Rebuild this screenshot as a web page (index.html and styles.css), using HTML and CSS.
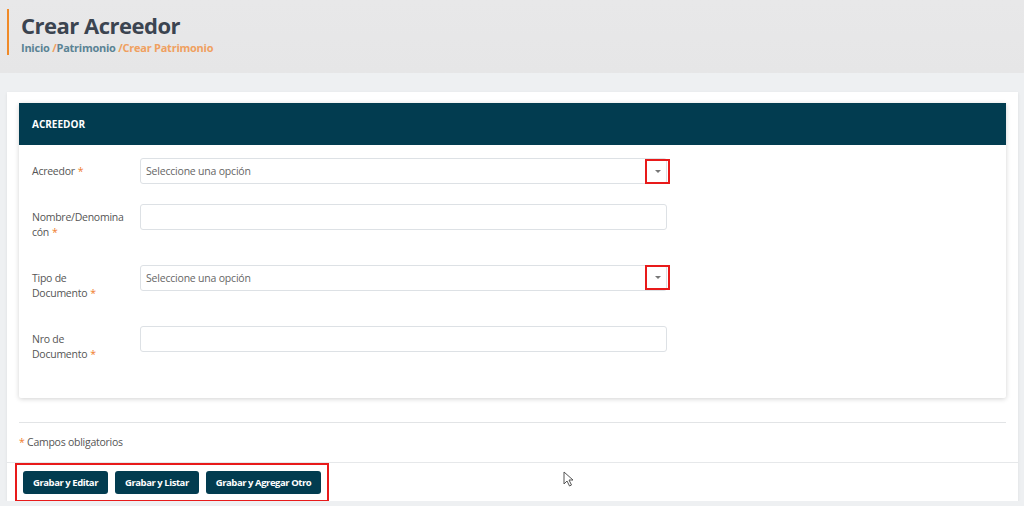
FILE: index.html
```html
<!DOCTYPE html>
<html lang="es">
<head>
    <meta charset="UTF-8">
    <title>Crear Acreedor</title>
    <link rel="stylesheet" href="styles.css">
</head>
<body>
    <div class="page-header">
        <div class="page-title">
            <h1>Crear Acreedor</h1>
            <div class="breadcrumb">
                <span class="crumb">Inicio</span>
                <span class="sep">/</span><span class="crumb">Patrimonio</span>
                <span class="sep">/</span><span class="current">Crear Patrimonio</span>
            </div>
        </div>
    </div>

    <div class="content">
        <div class="box">
            <div class="box-body">
                <div class="panel">
                    <div class="panel-heading">ACREEDOR</div>
                    <div class="panel-body">
                        <div class="form-row">
                            <label>Acreedor<span class="req">*</span></label>
                            <div class="select">
                                <span class="placeholder">Seleccione una opción</span>
                                <span class="caret-box mark"><span class="caret"></span></span>
                            </div>
                        </div>
                        <div class="form-row">
                            <label>Nombre/Denomina<br>cón<span class="req">*</span></label>
                            <div class="input"></div>
                        </div>
                        <div class="form-row">
                            <label>Tipo de<br>Documento<span class="req">*</span></label>
                            <div class="select">
                                <span class="placeholder">Seleccione una opción</span>
                                <span class="caret-box mark"><span class="caret"></span></span>
                            </div>
                        </div>
                        <div class="form-row">
                            <label>Nro de<br>Documento<span class="req">*</span></label>
                            <div class="input"></div>
                        </div>
                    </div>
                </div>
                <hr>
                <p class="note"><span class="req">*</span> Campos obligatorios</p>
            </div>
            <div class="box-footer">
                <div class="actions mark">
                    <button type="button">Grabar y Editar</button>
                    <button type="button">Grabar y Listar</button>
                    <button type="button">Grabar y Agregar Otro</button>
                </div>
                <svg class="pointer" width="12" height="16" viewBox="0 0 12 16">
                    <path d="M1 1 L1 13 L4 10 L6.5 15 L8.5 14 L6 9 L10 9 Z" fill="#fff" stroke="#555" stroke-width="1"/>
                </svg>
            </div>
        </div>
    </div>
</body>
</html>
```

FILE: styles.css
```css
body {
    margin: 0;
    font-family: "Open Sans", "Noto Sans", sans-serif;
    background-color: #eef0f2;
    color: #555;
    overflow: hidden;
}
.page-header {
    height: 73px;
    background: linear-gradient(to bottom, #e8e8e9, #e6e6e7);
    padding: 9px 0 0 7px;
    box-sizing: border-box;
}
.page-title {
    border-left: 2px solid #f08a28;
    padding-left: 12px;
    height: 46px;
}
.page-title h1 {
    margin: 0;
    font-size: 22px;
    line-height: 32px;
    font-weight: 700;
    letter-spacing: -0.5px;
    color: #3b4450;
}
.breadcrumb {
    font-size: 11px;
    font-weight: 700;
    line-height: 14px;
    letter-spacing: -0.25px;
    color: #5a8394;
}
.breadcrumb .sep, .breadcrumb .current {
    color: #f0a060;
}
.content {
    padding: 19px 6px 0 7px;
}
.box {
    background-color: #fff;
    box-shadow: 0 1px 3px rgba(0,0,0,0.08);
    position: relative;
}
.box-body {
    padding: 11px 12px 0 12px;
}
.panel {
    background-color: #fff;
    box-shadow: 0 1px 5px rgba(0,0,0,0.18);
    border-radius: 2px;
}
.panel-heading {
    background-color: #023c50;
    color: #fff;
    font-size: 10px;
    font-weight: 700;
    height: 42px;
    line-height: 42px;
    padding-left: 13px;
}
.panel-body {
    padding: 13px 0 30px 13px;
}
.form-row {
    display: flex;
    align-items: flex-start;
    margin-bottom: 19px;
}
.form-row:last-child {
    margin-bottom: 0;
}
.form-row label {
    width: 95px;
    margin-right: 13px;
    font-size: 10.5px;
    line-height: 15.5px;
    letter-spacing: -0.25px;
    color: #555;
    padding: 6px 0 5px 0;
}
.req {
    color: #f07d2d;
}
.form-row .req {
    margin-left: 3px;
}
.select, .input {
    width: 527px;
    height: 26px;
    border: 1px solid #dde1e5;
    border-radius: 3px;
    box-sizing: border-box;
    display: flex;
    align-items: center;
    justify-content: space-between;
    position: relative;
}
.placeholder {
    font-size: 10.5px;
    letter-spacing: -0.2px;
    color: #666;
    padding-left: 5px;
}
.caret-box {
    width: 21px;
    height: 21px;
    display: flex;
    align-items: center;
    justify-content: center;
    margin-right: -2px;
}
.caret {
    border-left: 3px solid transparent;
    border-right: 3px solid transparent;
    border-top: 3px solid #777;
}
.mark {
    outline: 2px solid #e81a1a;
}
.box-body hr {
    border: none;
    border-top: 1px solid #e2e4e6;
    margin: 24px 0 0 0;
}
.note {
    font-size: 10.5px;
    line-height: 15px;
    letter-spacing: -0.25px;
    margin: 0;
    padding: 12px 0 12px 0;
    color: #555;
}
.box-footer {
    border-top: 1px solid #e6e8ea;
    padding: 6px 0 7px 16px;
    position: relative;
}
.actions {
    display: inline-flex;
    gap: 7px;
    padding: 0;
    outline-offset: 6px;
}
.actions button {
    background-color: #023c50;
    color: #fff;
    border: none;
    border-radius: 3px;
    font-family: "Open Sans", sans-serif;
    font-weight: 700;
    font-size: 9.5px;
    letter-spacing: -0.45px;
    height: 23px;
    padding: 0 10px;
    cursor: pointer;
}
.pointer {
    position: absolute;
    left: 556px;
    top: 8px;
}
```
